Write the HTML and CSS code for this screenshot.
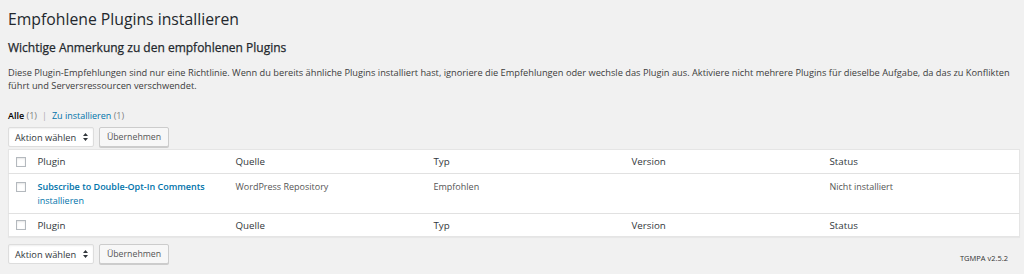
FILE: index.html
```html
<!DOCTYPE html>
<html lang="de">
<head>
    <meta charset="UTF-8" />
    <title>Empfohlene Plugins installieren</title>
    <link rel="stylesheet" href="styles.css">
</head>
<body>
    <div class="wrap">
        <h1 class="page-title">Empfohlene Plugins installieren</h1>
        <h2 class="notice-title">Wichtige Anmerkung zu den empfohlenen Plugins</h2>
        <p class="notice-text">Diese Plugin-Empfehlungen sind nur eine Richtlinie. Wenn du bereits ähnliche Plugins installiert hast, ignoriere die Empfehlungen oder wechsle das Plugin aus. Aktiviere nicht mehrere Plugins für dieselbe Aufgabe, da das zu Konflikten führt und Serversressourcen verschwendet.</p>

        <!-- Filter links -->
        <ul class="subsubsub">
            <li class="current">Alle <span class="count">(1)</span></li>
            <li class="sep">|</li>
            <li><a href="#">Zu installieren</a> <span class="count">(1)</span></li>
        </ul>

        <!-- Bulk actions top -->
        <div class="tablenav">
            <div class="fake-select">
                <span>Aktion wählen</span>
                <svg class="arrows" width="5" height="8" viewBox="0 0 5 8"><path d="M0 3 L2.5 0 L5 3 Z M0 5 L2.5 8 L5 5 Z" fill="#32373c"/></svg>
            </div>
            <button class="btn">Übernehmen</button>
        </div>

        <table class="plugins">
            <thead>
                <tr>
                    <th class="check-col"><span class="box"></span></th>
                    <th>Plugin</th>
                    <th>Quelle</th>
                    <th>Typ</th>
                    <th>Version</th>
                    <th>Status</th>
                </tr>
            </thead>
            <tbody>
                <tr>
                    <td class="check-col"><span class="box"></span></td>
                    <td><a class="plugin-name" href="#">Subscribe to Double-Opt-In Comments</a><br><a href="#">installieren</a></td>
                    <td>WordPress Repository</td>
                    <td>Empfohlen</td>
                    <td></td>
                    <td>Nicht installiert</td>
                </tr>
            </tbody>
            <tfoot>
                <tr>
                    <th class="check-col"><span class="box"></span></th>
                    <th>Plugin</th>
                    <th>Quelle</th>
                    <th>Typ</th>
                    <th>Version</th>
                    <th>Status</th>
                </tr>
            </tfoot>
        </table>

        <!-- Bulk actions bottom -->
        <div class="tablenav bottom">
            <div class="fake-select">
                <span>Aktion wählen</span>
                <svg class="arrows" width="5" height="8" viewBox="0 0 5 8"><path d="M0 3 L2.5 0 L5 3 Z M0 5 L2.5 8 L5 5 Z" fill="#32373c"/></svg>
            </div>
            <button class="btn">Übernehmen</button>
            <span class="version">TGMPA v2.5.2</span>
        </div>
    </div>
</body>
</html>
```

FILE: styles.css
```css
/* Basic Styling */
body {
    margin: 0;
    background-color: #f1f1f1;
    color: #3c3c3c;
    font-family: "Open Sans", "Liberation Sans", sans-serif;
    font-size: 9.25px;
}
a { color: #0073aa; text-decoration: none; }

.wrap {
    padding: 0 4px 0 8px;
}

.page-title {
    margin: 0;
    padding: 7px 0 0 0;
    font-size: 15.75px;
    font-weight: 400;
    line-height: 24px;
    color: #23282d;
}

.notice-title {
    margin: 8px 0 0 0;
    font-size: 12px;
    font-weight: 400;
    line-height: 18px;
    color: #23282d;
    -webkit-text-stroke: 0.25px #23282d;
}

.notice-text {
    margin: 9px 0 0 0;
    line-height: 13px;
}

/* Filter links */
.subsubsub {
    list-style-type: none;
    margin: 17px 0 0 0;
    padding: 0;
    display: flex;
    gap: 5px;
    line-height: 14px;
    font-size: 9px;
    color: #666;
}
.subsubsub .current { color: #000; font-weight: 600; }
.subsubsub .count { color: #808080; font-weight: 400; }
.subsubsub .sep { color: #aaa; }

/* Bulk actions */
.tablenav {
    display: flex;
    align-items: center;
    gap: 5px;
    height: 20px;
    margin: 4px 0 2px 0;
}
.tablenav.bottom { margin-top: 7px; }

.fake-select {
    box-sizing: border-box;
    width: 86px;
    height: 20px;
    padding: 0 5px 0 6px;
    display: flex;
    align-items: center;
    justify-content: space-between;
    background-color: #fff;
    border: 1px solid #ddd;
    border-radius: 2px;
    box-shadow: inset 0 1px 2px rgba(0, 0, 0, 0.07);
    color: #32373c;
    font-size: 9.25px;
}

.btn {
    box-sizing: border-box;
    width: 70px;
    height: 20px;
    padding: 0;
    background-color: #f7f7f7;
    border: 1px solid #ccc;
    border-radius: 2px;
    box-shadow: 0 1px 0 #ccc;
    color: #555;
    font-family: inherit;
    font-size: 8.75px;
}

.version {
    margin-left: auto;
    margin-right: 12px;
    margin-top: 7px;
    font-size: 7.5px;
    color: #333;
}

/* Plugin table */
.plugins {
    width: 1012px;
    border-collapse: collapse;
    table-layout: fixed;
    background-color: #fff;
    border: 1px solid #e5e5e5;
    box-shadow: 0 1px 1px rgba(0, 0, 0, 0.04);
}
.plugins th {
    text-align: left;
    font-weight: 400;
    font-size: 9.75px;
    color: #32373c;
    height: 23px;
    padding: 0 8px;
}
.plugins thead th { border-bottom: 1px solid #e1e1e1; }
.plugins tfoot th { border-top: 1px solid #e1e1e1; height: 22px; }
.plugins td {
    vertical-align: top;
    padding: 6px 8px 5px 8px;
    line-height: 14px;
    font-size: 9px;
    color: #555;
}
.plugins .check-col {
    width: 21px;
    padding: 0 0 0 7px;
    box-sizing: border-box;
}
.plugins td.check-col { padding-top: 8px; }
.box {
    display: block;
    width: 8px;
    height: 8px;
    border: 1px solid #b4b9be;
    background-color: #fff;
    box-shadow: inset 0 1px 2px rgba(0, 0, 0, 0.1);
}
.plugin-name { font-weight: 600; }
```
